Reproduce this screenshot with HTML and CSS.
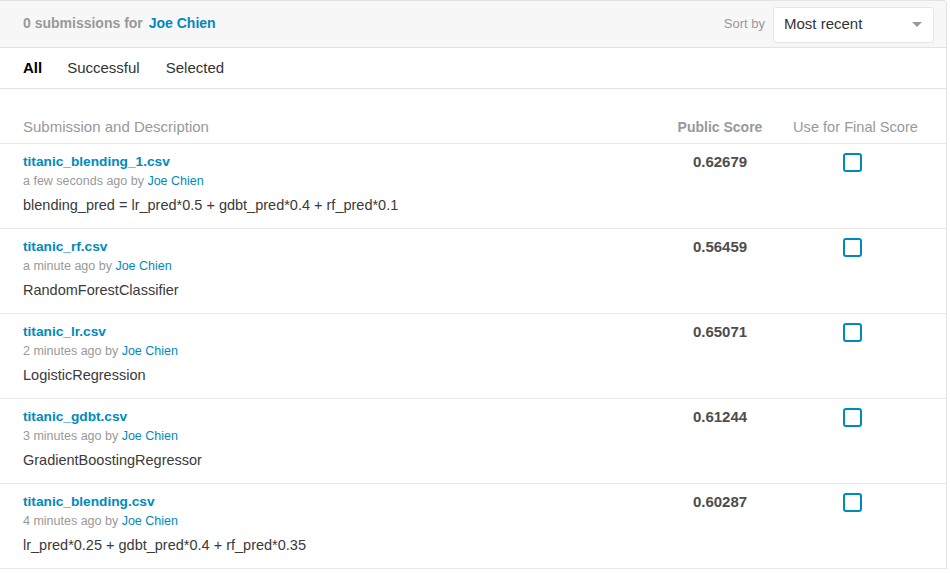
FILE: index.html
```html
<!DOCTYPE html>
<html>
<head>
<meta charset="utf-8">
<link rel="stylesheet" href="styles.css">
</head>
<body>
<div class="panel">
  <div class="panel-head">
    <div class="count">0 submissions for <a class="user">Joe Chien</a></div>
    <div class="sort">
      <span class="sort-label">Sort by</span>
      <div class="select">
        <span>Most recent</span>
        <span class="caret"></span>
      </div>
    </div>
  </div>
  <div class="tabs">
    <span class="tab active">All</span>
    <span class="tab">Successful</span>
    <span class="tab">Selected</span>
  </div>
  <div class="grid colhead">
    <div class="c-desc">Submission and Description</div>
    <div class="c-score">Public Score</div>
    <div class="c-final">Use for Final Score</div>
  </div>

  <div class="grid row">
    <div class="c-desc">
      <div class="fname">titanic_blending_1.csv</div>
      <div class="meta">a few seconds ago by <a class="user-link">Joe Chien</a></div>
      <div class="desc">blending_pred = lr_pred*0.5 + gdbt_pred*0.4 + rf_pred*0.1</div>
    </div>
    <div class="c-score score">0.62679</div>
    <div class="c-final"><span class="check"></span></div>
  </div>

  <div class="grid row">
    <div class="c-desc">
      <div class="fname">titanic_rf.csv</div>
      <div class="meta">a minute ago by <a class="user-link">Joe Chien</a></div>
      <div class="desc">RandomForestClassifier</div>
    </div>
    <div class="c-score score">0.56459</div>
    <div class="c-final"><span class="check"></span></div>
  </div>

  <div class="grid row">
    <div class="c-desc">
      <div class="fname">titanic_lr.csv</div>
      <div class="meta">2 minutes ago by <a class="user-link">Joe Chien</a></div>
      <div class="desc">LogisticRegression</div>
    </div>
    <div class="c-score score">0.65071</div>
    <div class="c-final"><span class="check"></span></div>
  </div>

  <div class="grid row">
    <div class="c-desc">
      <div class="fname">titanic_gdbt.csv</div>
      <div class="meta">3 minutes ago by <a class="user-link">Joe Chien</a></div>
      <div class="desc">GradientBoostingRegressor</div>
    </div>
    <div class="c-score score">0.61244</div>
    <div class="c-final"><span class="check"></span></div>
  </div>

  <div class="grid row">
    <div class="c-desc">
      <div class="fname">titanic_blending.csv</div>
      <div class="meta">4 minutes ago by <a class="user-link">Joe Chien</a></div>
      <div class="desc">lr_pred*0.25 + gdbt_pred*0.4 + rf_pred*0.35</div>
    </div>
    <div class="c-score score">0.60287</div>
    <div class="c-final"><span class="check"></span></div>
  </div>
</div>
</body>
</html>
```

FILE: styles.css
```css
html, body {
  margin: 0;
  padding: 0;
  background: #fff;
}
body {
  font-family: "Liberation Sans", Arial, sans-serif;
  color: #333;
  width: 950px;
  height: 573px;
  overflow: hidden;
}
.panel {
  width: 946px;
  border-top: 1px solid #e3e3e3;
  border-right: 1px solid #e3e3e3;
  border-top-right-radius: 4px;
  background: #fff;
}
.panel-head {
  height: 46px;
  background: #f7f7f7;
  border-bottom: 1px solid #e3e3e3;
  border-top-right-radius: 4px;
  display: flex;
  align-items: center;
  justify-content: space-between;
  padding: 0 12px 0 23px;
}
.count {
  font-size: 14px;
  font-weight: bold;
  color: #999;
  margin-top: -2px;
}
.user {
  color: #008abc;
  margin-left: 2px;
}
.sort {
  display: flex;
  align-items: center;
  gap: 8px;
}
.sort-label {
  font-size: 13px;
  color: #999;
  margin-top: -2px;
}
.select {
  width: 138px;
  height: 34px;
  border: 1px solid #e6e6e6;
  border-radius: 3px;
  background: #fff;
  display: flex;
  align-items: center;
  justify-content: space-between;
  padding: 0 11px 2px 10px;
  box-sizing: content-box;
  font-size: 15px;
  color: #333;
  margin-top: 1px;
  height: 32px;
}
.caret {
  width: 0;
  height: 0;
  border-left: 5px solid transparent;
  border-right: 5px solid transparent;
  border-top: 5px solid #999;
  margin-top: 2px;
}
.tabs {
  height: 38px;
  padding-bottom: 2px;
  display: flex;
  align-items: center;
  padding-left: 23px;
  gap: 26px;
  border-bottom: 1px solid #e3e3e3;
  font-size: 15px;
  color: #333;
}
.tab.active {
  font-weight: bold;
  color: #000;
  margin-right: -1px;
}
.grid {
  display: grid;
  grid-template-columns: 1fr 120px 150px;
  padding: 0 16px 0 23px;
  border-bottom: 1px solid #e8e8e8;
}
.colhead {
  padding-top: 28px;
  padding-bottom: 6px;
  line-height: 20px;
  color: #999;
}
.colhead .c-desc {
  font-size: 15px;
}
.colhead .c-score {
  font-size: 14px;
  font-weight: bold;
  text-align: center;
}
.colhead .c-final {
  font-size: 14.6px;
  text-align: center;
  padding-left: 1px;
}
.row {
  padding-top: 9px;
  padding-bottom: 12px;
}
.fname {
  font-size: 13.7px;
  font-weight: bold;
  color: #008abc;
  line-height: 18px;
}
.meta {
  font-size: 12.5px;
  color: #999;
  line-height: 20px;
}
.user-link {
  color: #008abc;
}
.desc {
  margin-top: 3px;
  font-size: 14.5px;
  line-height: 22px;
  color: #3a3a3a;
}
.score {
  text-align: center;
  font-size: 15px;
  font-weight: bold;
  color: #4d4d4d;
  line-height: 18px;
}
.c-final {
  display: flex;
  justify-content: center;
  align-items: flex-start;
}
.check {
  display: block;
  width: 15px;
  height: 15px;
  border: 2px solid #008abc;
  border-radius: 3px;
  margin-top: 0px;
  margin-right: 5px;
}
```
